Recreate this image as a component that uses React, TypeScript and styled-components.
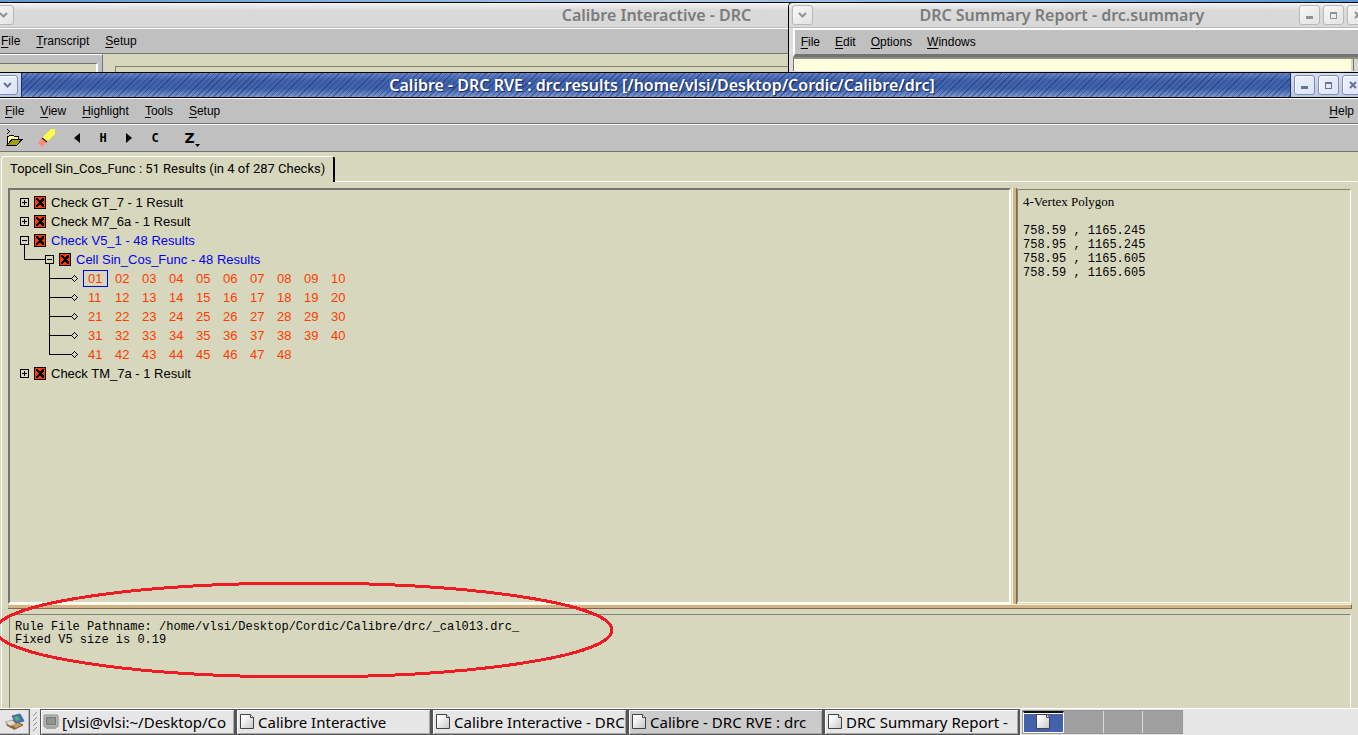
import React from 'react';
import styled, { createGlobalStyle, css } from 'styled-components';

const BEIGE = '#d7d7bd';
const GRAY = '#c0c0c0';
const DARK = '#737373';
const SHADE = '#838371';
const UI_FONT = '"Liberation Sans", Arial, sans-serif';
const TITLE_FONT = '"Noto Sans", "Open Sans", sans-serif';
const MONO_FONT = '"Liberation Mono", monospace';

const GlobalStyle = createGlobalStyle`
  * { box-sizing: border-box; }
  body { margin: 0; background: ${BEIGE}; font: 13px/17px ${UI_FONT}; color: #000; }
  button { font: inherit; color: inherit; background: none; border: 0; padding: 0; margin: 0; }
  svg { display: block; flex: none; }
`;

const Desktop = styled.div`
  display: flex;
  flex-direction: column;
  height: 100vh;
  overflow: hidden;
`;

/* ---------- window frames ---------- */

const Backdrop = styled.div`
  position: relative;
  flex: none;
  height: 72px;
  overflow: hidden;
  padding-top: 2px;
  background: linear-gradient(90deg, #5c9ad2, #a9c9e8 50%, #4f97d6);
`;

const RearWindow = styled.section`
  border-top: 1px solid #000;
`;

const FloatingWindow = styled.section`
  position: absolute;
  top: 2px;
  right: 0;
  bottom: 0;
  width: 42%;
  overflow: hidden;
  border-top: 1px solid #000;
  border-left: 1px solid #000;
  border-top-left-radius: 5px;
  background: #dedede;
`;

const TitleBar = styled.header<{ $active?: boolean; $inset?: boolean }>`
  display: flex;
  align-items: stretch;
  flex: none;
  height: 25px;
  overflow: hidden;
  border-bottom: 1px solid #bcbcbc;
  color: #7b7b7b;
  background: linear-gradient(#f4f4f4, #dadada 30%, #d8d8d8);
  ${(p) => p.$inset && css`padding-left: 2px;`}
  ${(p) =>
    p.$active &&
    css`
      height: 26px;
      border-top: 1px solid #000;
      border-bottom: 1px solid #000;
      color: #fff;
      background: linear-gradient(#d6def0, #bcc8e0);
    `}
`;

const TitleText = styled.h1<{ $active?: boolean; $shifted?: boolean }>`
  flex: 1;
  margin: 0;
  padding-left: ${(p) => (p.$shifted ? 12 : 0)}px;
  overflow: hidden;
  text-align: center;
  white-space: nowrap;
  font: 600 16px/25px ${TITLE_FONT};
  ${(p) =>
    p.$active &&
    css`
      border-left: 1px solid #1c2f66;
      border-right: 1px solid #1c2f66;
      text-shadow: 1px 1px 1px #14265c;
      background:
        repeating-linear-gradient(135deg, rgba(20, 44, 110, 0.45) 0 1px, transparent 1px 4px),
        linear-gradient(#6685c6, #4263ac 30%, #4062ab 65%, #7f9ad2);
    `}
`;

const ButtonGroup = styled.div<{ $side: 'left' | 'right' }>`
  display: flex;
  flex: none;
  gap: 3px;
  padding-top: 2px;
  overflow: hidden;
  ${(p) =>
    p.$side === 'left'
      ? css`justify-content: flex-end; width: 21px; padding-right: 3px;`
      : css`width: 67px; padding-left: 3px;`}
`;

const RearLeft = styled(ButtonGroup)`
  width: 14px;
  padding-right: 0;
`;

const FloatLeft = styled(ButtonGroup)`
  width: 22px;
  padding-right: 0;
`;

const RearRight = styled(ButtonGroup)`
  width: 59px;
  padding-left: 0;
`;

const FrameButton = styled.button<{ $active?: boolean }>`
  display: flex;
  align-items: center;
  justify-content: center;
  flex: none;
  width: 21px;
  height: 20px;
  border: 1px solid #b9b9b9;
  border-radius: 3px;
  color: #929292;
  background: linear-gradient(135deg, #f8f8f8, #e2e2e2);
  ${(p) =>
    p.$active &&
    css`
      border-color: #7d8fb8;
      box-shadow: inset 1px 1px 0 #fff;
      color: #65719b;
      background: linear-gradient(135deg, #eef1fb, #dde4f4);
    `}
`;

/* ---------- menus and toolbar ---------- */

const MenuBar = styled.nav<{ $framed?: boolean; $main?: boolean }>`
  display: flex;
  align-items: center;
  flex: none;
  gap: 16px;
  height: 26px;
  padding: 1px 4px 0 1px;
  border-top: 1px solid #fff;
  border-bottom: 1px solid ${DARK};
  background: ${GRAY};
  font-size: 12px;
  ${(p) => p.$main && css`padding-left: 5px;`}
  ${(p) =>
    p.$framed &&
    css`
      gap: 15px;
      height: 29px;
      margin-left: 4px;
      padding-left: 6px;
      border-top: 2px solid #fff;
      border-left: 2px solid #fff;
      border-bottom: 3px solid ${DARK};
    `}
`;

const MenuItem = styled.button<{ $end?: boolean }>`
  white-space: nowrap;
  ${(p) => p.$end && css`margin-left: auto;`}
  &::first-letter {
    text-decoration: underline;
    text-decoration-thickness: 1px;
    text-underline-offset: 2px;
  }
`;

const Toolbar = styled.div`
  display: flex;
  align-items: center;
  flex: none;
  height: 28px;
  padding-left: 4px;
  border-top: 1px solid #fff;
  border-bottom: 1px solid ${DARK};
  background: ${GRAY};
`;

const ToolButton = styled.button`
  display: flex;
  align-items: center;
  justify-content: center;
  width: 26px;
  height: 24px;
  font: 700 12px/24px "DejaVu Sans Mono", monospace;
`;

const FolderButton = styled(ToolButton)`
  width: 20px;
`;

const EraserButton = styled(ToolButton)`
  width: 40px;
  padding-left: 6px;
`;

const ZoomButton = styled(ToolButton)`
  width: 48px;
  font: 700 14px/24px "DejaVu Sans", sans-serif;
`;

/* ---------- strips visible behind the main window ---------- */

const RearBody = styled.div`
  display: flex;
  height: 18px;
  background: ${BEIGE};
`;

const RearSide = styled.div`
  width: 103px;
  padding: 8px 4px 0 0;
  border-top: 1px solid #fff;
  border-right: 1px solid ${DARK};
  background: ${GRAY};
`;

const RearField = styled.div`
  height: 9px;
  border-top: 1px solid ${DARK};
  border-right: 2px solid #fff;
  background: ${BEIGE};
`;

const RearPane = styled.div`
  flex: 1;
  margin: 12px 0 0 12px;
  border-top: 1px solid ${SHADE};
  border-left: 1px solid ${SHADE};
`;

const ReportBody = styled.div`
  display: flex;
  height: 14px;
  margin-left: 4px;
  border-left: 1px solid ${DARK};
  border-top: 2px solid #8f8f80;
  background: #ffffe0;
`;

const ScrollEdge = styled.div`
  width: 5px;
  margin-left: auto;
  border-left: 1px solid ${DARK};
  background: #d4d4d4;
  box-shadow: -2px 0 0 ${BEIGE};
`;

/* ---------- main window ---------- */

const MainWindow = styled.main`
  display: flex;
  flex: 1;
  flex-direction: column;
  min-height: 0;
`;

const TabStrip = styled.div`
  display: flex;
  flex: none;
  height: 30px;
  padding: 4px 1px 0 1px;
`;

const Tab = styled.button`
  height: 26px;
  padding: 0 8px 2px;
  border-top: 1px solid #fff;
  border-left: 1px solid #fff;
  border-right: 2px solid #000;
  border-radius: 4px 3px 0 0;
  white-space: nowrap;
  font: 13px/22px Roboto, sans-serif;
`;

const TabLine = styled.div`
  flex: 1;
  border-bottom: 1px solid #fff;
`;

const Page = styled.div`
  display: flex;
  flex: 1;
  flex-direction: column;
  min-height: 0;
  margin-left: 1px;
  padding: 6px 6px 0 6px;
  border-left: 1px solid #fff;
`;

const Split = styled.div`
  display: flex;
  flex: 1;
  min-height: 0;
`;

const TreePane = styled.div`
  flex: 1;
  padding: 3px 10px;
  border: 2px solid #fff;
  border-top-color: ${DARK};
  border-left-color: ${DARK};
`;

const VerticalSash = styled.div`
  flex: none;
  width: 5px;
  margin-left: 1px;
  border-left: 1px solid #fff8c4;
  border-right: 1px solid #84694c;
  background: #d2b48c;
`;

const HorizontalSash = styled.div`
  flex: none;
  height: 5px;
  border-top: 1px solid #fff8c4;
  border-bottom: 1px solid #84694c;
  border-right: 1px solid #84694c;
  background: #d2b48c;
`;

const DetailPane = styled.aside`
  flex: 0 1 334px;
  margin: 1px 1px 1px 0;
  padding: 5px;
  border: 1px solid #fff;
  border-top-color: ${SHADE};
  border-left-color: ${SHADE};
  font: 12px/14px ${MONO_FONT};
`;

const DetailHeading = styled.h2`
  margin: 0 0 15px;
  font: 13px/14px "Liberation Serif", serif;
`;

const Coordinate = styled.p`
  margin: 0;
  white-space: pre;
`;

const MessagePane = styled.div`
  position: relative;
  flex: none;
  height: 94px;
  margin: 5px 1px 0 1px;
  padding: 6px 5px;
  border-top: 1px solid ${SHADE};
  border-left: 1px solid ${SHADE};
  border-right: 1px solid #fff;
  font: 12px/13px ${MONO_FONT};
`;

const Message = styled.p`
  margin: 0;
  white-space: pre;
`;

const Marker = styled.svg`
  position: absolute;
  left: -14px;
  top: -36px;
  pointer-events: none;
`;

/* ---------- result tree ---------- */

const TreeRow = styled.div<{ $selected?: boolean }>`
  display: flex;
  align-items: center;
  height: 19px;
  color: ${(p) => (p.$selected ? '#0000f0' : '#000')};
`;

const Toggle = styled.button`
  margin-right: 5px;
`;

const FailIcon = styled.svg`
  margin-right: 5px;
`;

const ResultRow = styled(TreeRow)`
  gap: 2px;
  padding-left: 25px;
`;

const Result = styled.button<{ $current?: boolean }>`
  width: 25px;
  height: 17px;
  padding-left: 4px;
  border: 1px solid ${(p) => (p.$current ? '#0000f0' : 'transparent')};
  color: #ff3c00;
  text-align: left;
  line-height: 15px;
`;

const Branch = styled.svg`
  margin-right: -2px;
`;

/* ---------- taskbar ---------- */

const Taskbar = styled.footer`
  display: flex;
  flex: none;
  height: 27px;
  border-top: 1px solid #fff;
  background: #e6e6e6;
`;

const Launcher = styled.button`
  display: flex;
  align-items: center;
  justify-content: center;
  width: 30px;
  border: 1px solid #5a5a5a;
  border-left: 0;
  box-shadow: inset -1px -1px 0 #bbb;
`;

const Grip = styled.div`
  width: 10px;
  padding: 2px;
`;

const Task = styled.button<{ $active?: boolean }>`
  display: flex;
  align-items: center;
  gap: 3px;
  flex: 0 1 196px;
  min-width: 0;
  padding: 0 0 0 2px;
  border: 1px solid #555;
  border-right-width: 2px;
  box-shadow: inset 1px 1px 0 #fff, inset -1px -1px 0 #a8a8a8;
  background: ${(p) => (p.$active ? '#cbcbcb' : '#e6e6e6')};
`;

const TaskLabel = styled.span`
  flex: 1;
  overflow: hidden;
  text-align: left;
  white-space: nowrap;
  font: 15px/22px "Noto Sans", sans-serif;
`;

const Pager = styled.div`
  display: flex;
  width: 161px;
  margin: 1px 0 1px 2px;
  border: 1px solid #979797;
  background: #a0a0a0;
`;

const Workspace = styled.button<{ $current?: boolean }>`
  display: flex;
  justify-content: center;
  flex: 1;
  border-right: 1px solid #dcdcdc;
  &:last-child { border-right: 0; }
  ${(p) =>
    p.$current &&
    css`
      border: 1px solid #fff;
      border-top: 2px solid #101010;
      background: #4362ab;
      box-shadow: inset 0 1px 0 #fff;
    `}
`;

/* ---------- drawings ---------- */

const Chevron = () => (
  <svg width="9" height="7" viewBox="0 0 9 7" fill="none" stroke="currentColor" strokeWidth="2">
    <path d="M1 1 L4.500 4.500 L8 1" />
  </svg>
);
const Minimize = () => (
  <svg width="7" height="9" viewBox="0 0 7 9" fill="currentColor"><rect y="5" width="7" height="3" /></svg>
);
const Maximize = () => (
  <svg width="7" height="9" viewBox="0 0 7 9" fill="currentColor" fillRule="evenodd">
    <path d="M0 1h7v7H0z M1 3v4h5V3z" />
  </svg>
);
const Close = () => (
  <svg width="8" height="8" viewBox="0 0 8 8" stroke="currentColor" strokeWidth="2"><path d="M1 1 L7 7 M7 1 L1 7" /></svg>
);
const Folder = () => (
  <svg width="17" height="20" viewBox="0 0 17 20" shapeRendering="crispEdges">
    <path d="M1 1h1v1h1v1h1v1h-1v1h-1v1h-1v-1h1v-1h1v-1h-1v-1h-1z" />
    <path d="M1 17V8h2l1-1h3l1 1h4v3H6l-4 6z" fill="#ffff8c" stroke="#000" />
    <path d="M1 17L6 11.500H16L11 17z" fill="#a0a000" stroke="#000" />
  </svg>
);
const Eraser = () => (
  <svg width="18" height="20" viewBox="0 0 18 20">
    <path d="M13 1h4v5L9 14 4 10z" fill="#ffff46" />
    <path d="M4 10l5 4-5 5-4-4z" fill="#ff8a80" />
    <path d="M4 10l5 4" stroke="#222" strokeWidth="1.500" />
  </svg>
);
const Arrow = ({ flip }: { flip?: boolean }) => (
  <svg width="6" height="10" viewBox="0 0 6 10"><path d={flip ? 'M0 0L6 5L0 10z' : 'M6 0L0 5L6 10z'} /></svg>
);
const DropMark = () => (
  <svg width="5" height="20" viewBox="0 0 5 20"><path d="M0 16H5L2.500 19z" /></svg>
);
const Fail = () => (
  <FailIcon width="12" height="13" viewBox="0 0 12 13" shapeRendering="crispEdges">
    <rect x="0.500" y="0.500" width="11" height="12" fill="#ff3c00" stroke="#000" />
    <path d="M2 2H4L6 5L8 2H10V4L7.500 6.500L10 9V11H8L6 8L4 11H2V9L4.500 6.500L2 4z" />
  </FailIcon>
);
const ToggleBox = ({ open }: { open?: boolean }) => (
  <svg width="9" height="19" viewBox="0 0 9 19" shapeRendering="crispEdges" fill="none" stroke="#000">
    <rect x="0.500" y="5.500" width="8" height="8" />
    <path d={open ? 'M2 9.500H7M4.500 14V19' : 'M2 9.500H7M4.500 7V12'} />
  </svg>
);
const Elbow = () => (
  <svg width="25" height="19" viewBox="0 0 25 19" shapeRendering="crispEdges" fill="none" stroke="#000">
    <path d="M4.500 0V9.500H25" />
  </svg>
);
const ResultBranch = ({ last }: { last: boolean }) => (
  <Branch width="38" height="19" viewBox="0 0 38 19" shapeRendering="crispEdges" fill="none" stroke="#000">
    <path d={last ? 'M4.500 0V9.500H26' : 'M4.500 0V19M4.500 9.500H26'} />
    <path d="M29.500 6.500L32.500 9.500L29.500 12.500L26.500 9.500z" />
  </Branch>
);
const Sheet = () => (
  <svg width="16" height="18" viewBox="0 0 16 18">
    <defs>
      <linearGradient id="sheet" x1="0" y1="0" x2="1" y2="1">
        <stop offset="0.200" stopColor="#fff" />
        <stop offset="1" stopColor="#c4c4c4" />
      </linearGradient>
    </defs>
    <path d="M1.500 1.500H11.500L14.500 4.500V15.500H1.500z" fill="url(#sheet)" stroke="#444" />
    <path d="M11.500 1.500V4.500H14.500" fill="#eee" stroke="#444" />
  </svg>
);
const Terminal = () => (
  <svg width="16" height="16" viewBox="0 0 16 16">
    <rect x="1" y="1" width="14" height="12" rx="1" fill="#b9b9b5" stroke="#8c8c88" />
    <rect x="3.500" y="3.500" width="9" height="7" fill="#8f9490" stroke="#75786f" />
    <rect x="3" y="13" width="10" height="2" fill="#a5a5a0" />
  </svg>
);
const DesktopIcon = () => (
  <svg width="22" height="18" viewBox="0 0 22 18">
    <path d="M2 10L9 7L19 12L11 16z" fill="#c89a5c" stroke="#7b5a35" />
    <path d="M2 10L11 14V17L3 13z" fill="#8a6237" />
    <path d="M8 3L16 1L20 8L12 10z" fill="#3d74c0" stroke="#4a6590" />
    <path d="M10 4L14 3L16 7L12 8z" fill="#55b06a" />
    <path d="M1 9L8 7L12 11L6 13z" fill="#e4dccb" stroke="#8d8577" strokeWidth="0.500" />
  </svg>
);
const GripLines = () => (
  <svg width="6" height="22" viewBox="0 0 6 22" stroke="#909090">
    <path d="M1 5L5 1M1 10L5 6M1 15L5 11M1 20L5 16" />
  </svg>
);

const WindowButtons = ({ active }: { active?: boolean }) => (
  <>
    <FrameButton $active={active} aria-label="Minimize"><Minimize /></FrameButton>
    <FrameButton $active={active} aria-label="Maximize"><Maximize /></FrameButton>
    <FrameButton $active={active} aria-label="Close"><Close /></FrameButton>
  </>
);

const Check = ({ label, open }: { label: string; open?: boolean }) => (
  <TreeRow $selected={open}>
    <Toggle aria-label={label} aria-expanded={!!open}><ToggleBox open={open} /></Toggle>
    <Fail />
    {label}
  </TreeRow>
);

const RESULT_COUNT = 48;
const PER_ROW = 10;
const results = Array.from({ length: RESULT_COUNT }, (_, i) => String(i + 1).padStart(2, '0'));
const resultRows = Array.from({ length: Math.ceil(RESULT_COUNT / PER_ROW) }, (_, r) =>
  results.slice(r * PER_ROW, (r + 1) * PER_ROW),
);
const vertices = ['758.59 , 1165.245', '758.95 , 1165.245', '758.95 , 1165.605', '758.59 , 1165.605'];
const tasks = ['Calibre Interactive', 'Calibre Interactive - DRC', 'Calibre - DRC RVE : drc', 'DRC Summary Report -'];

export default function App() {
  return (
    <Desktop>
      <GlobalStyle />
      <Backdrop>
        <RearWindow>
          <TitleBar>
            <RearLeft $side="left"><FrameButton aria-label="Window menu"><Chevron /></FrameButton></RearLeft>
            <TitleText>Calibre Interactive - DRC</TitleText>
            <RearRight $side="right"><WindowButtons /></RearRight>
          </TitleBar>
          <MenuBar>
            {['File', 'Transcript', 'Setup'].map((m) => <MenuItem key={m}>{m}</MenuItem>)}
          </MenuBar>
          <RearBody>
            <RearSide><RearField /></RearSide>
            <RearPane />
          </RearBody>
        </RearWindow>
        <FloatingWindow>
          <TitleBar $inset>
            <FloatLeft $side="left"><FrameButton aria-label="Window menu"><Chevron /></FrameButton></FloatLeft>
            <TitleText $shifted>DRC Summary Report - drc.summary</TitleText>
            <RearRight $side="right"><WindowButtons /></RearRight>
          </TitleBar>
          <MenuBar $framed>
            {['File', 'Edit', 'Options', 'Windows'].map((m) => <MenuItem key={m}>{m}</MenuItem>)}
          </MenuBar>
          <ReportBody><ScrollEdge /></ReportBody>
        </FloatingWindow>
      </Backdrop>

      <MainWindow>
        <TitleBar $active>
          <ButtonGroup $side="left"><FrameButton $active aria-label="Window menu"><Chevron /></FrameButton></ButtonGroup>
          <TitleText $active $shifted>Calibre - DRC RVE : drc.results [/home/vlsi/Desktop/Cordic/Calibre/drc]</TitleText>
          <ButtonGroup $side="right"><WindowButtons active /></ButtonGroup>
        </TitleBar>
        <MenuBar $main>
          {['File', 'View', 'Highlight', 'Tools', 'Setup'].map((m) => <MenuItem key={m}>{m}</MenuItem>)}
          <MenuItem $end>Help</MenuItem>
        </MenuBar>
        <Toolbar>
          <FolderButton aria-label="Open"><Folder /></FolderButton>
          <EraserButton aria-label="Clear highlights"><Eraser /></EraserButton>
          <ToolButton aria-label="Previous"><Arrow /></ToolButton>
          <ToolButton>H</ToolButton>
          <ToolButton aria-label="Next"><Arrow flip /></ToolButton>
          <ToolButton>C</ToolButton>
          <ZoomButton>Z<DropMark /></ZoomButton>
        </Toolbar>
        <TabStrip>
          <Tab>Topcell Sin_Cos_Func : 51 Results (in 4 of 287 Checks)</Tab>
          <TabLine />
        </TabStrip>
        <Page>
          <Split>
            <TreePane>
              <Check label="Check GT_7 - 1 Result" />
              <Check label="Check M7_6a - 1 Result" />
              <Check label="Check V5_1 - 48 Results" open />
              <TreeRow $selected>
                <Elbow />
                <Toggle aria-label="Cell Sin_Cos_Func" aria-expanded><ToggleBox open /></Toggle>
                <Fail />
                Cell Sin_Cos_Func - 48 Results
              </TreeRow>
              {resultRows.map((row, r) => (
                <ResultRow key={r}>
                  <ResultBranch last={r === resultRows.length - 1} />
                  {row.map((n) => <Result key={n} $current={n === '01'}>{n}</Result>)}
                </ResultRow>
              ))}
              <Check label="Check TM_7a - 1 Result" />
            </TreePane>
            <VerticalSash />
            <DetailPane>
              <DetailHeading>4-Vertex Polygon</DetailHeading>
              {vertices.map((v, i) => <Coordinate key={i}>{v}</Coordinate>)}
            </DetailPane>
          </Split>
          <HorizontalSash />
          <MessagePane>
            <Message>Rule File Pathname: /home/vlsi/Desktop/Cordic/Calibre/drc/_cal013.drc_</Message>
            <Message>Fixed V5 size is 0.19</Message>
            <Marker width="624" height="104" viewBox="0 0 624 104">
              <ellipse cx="308" cy="51" rx="308" ry="47" fill="none" stroke="#ed1c24" strokeWidth="3" shapeRendering="crispEdges" />
            </Marker>
          </MessagePane>
        </Page>
      </MainWindow>

      <Taskbar>
        <Launcher aria-label="Show desktop"><DesktopIcon /></Launcher>
        <Grip><GripLines /></Grip>
        <Task><Terminal /><TaskLabel>[vlsi@vlsi:~/Desktop/Co</TaskLabel></Task>
        {tasks.map((t, i) => (
          <Task key={t} $active={i === 2}><Sheet /><TaskLabel>{t}</TaskLabel></Task>
        ))}
        <Pager>
          <Workspace $current aria-label="Workspace 1"><Sheet /></Workspace>
          <Workspace aria-label="Workspace 2" />
          <Workspace aria-label="Workspace 3" />
          <Workspace aria-label="Workspace 4" />
        </Pager>
      </Taskbar>
    </Desktop>
  );
}
